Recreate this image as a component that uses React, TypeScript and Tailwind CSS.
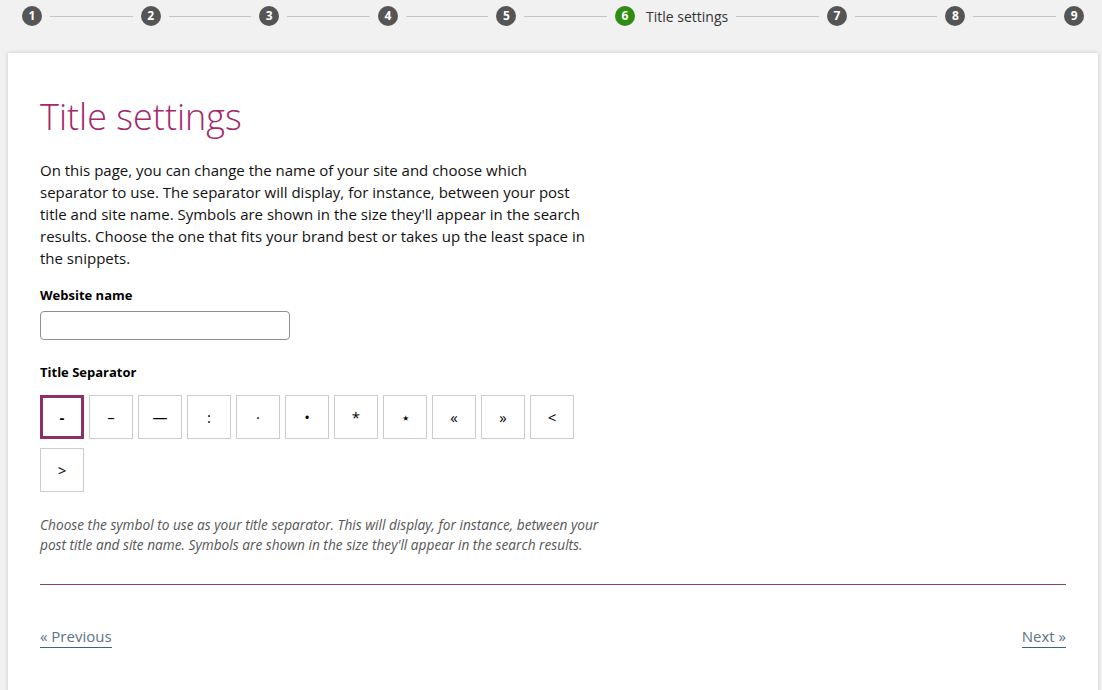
import React from 'react';

const steps = ['1', '2', '3', '4', '5', '6', '7', '8', '9'];
const separators = ['-', '–', '—', ':', '·', '•', '*', '⋆', '«', '»', '<', '>'];

const Stepper: React.FC = () => {
  return (
    <div className="flex items-center h-[32px] pl-[22px] pr-[18px]">
      {steps.map((s, i) => (
        <React.Fragment key={s}>
          <div className="flex items-center shrink-0">
            <span
              className={`w-[20px] h-[20px] rounded-full flex items-center justify-center text-[12px] font-bold text-white ${
                s === '6' ? 'bg-[#2f8d12]' : 'bg-[#555555]'
              }`}
            >
              {s}
            </span>
            {s === '6' && <span className="ml-[11px] text-[14px] text-[#333]">Title settings</span>}
          </div>
          {i < steps.length - 1 && <div className="flex-1 h-px bg-[#c4c4c4] mx-[8px]" />}
        </React.Fragment>
      ))}
    </div>
  );
};

export default function App() {
  return (
    <div
      className="h-[690px] bg-[#f1f1f1] text-[#1e1e1e] overflow-hidden"
      style={{ fontFamily: '"Open Sans", "Noto Sans", sans-serif' }}
    >
      <Stepper />
      <div className="mt-[21px] ml-[8px] w-[1090px] bg-white shadow-[0_0_4px_rgba(0,0,0,0.18)] px-[32px] pt-[42px] pb-[80px]">
        <h1 className="text-[36px] leading-[44px] font-light text-[#a4286a]">Title settings</h1>

        <p className="mt-[20px] text-[15px] leading-[22px] text-[#111]">
          On this page, you can change the name of your site and choose which
          <br />
          separator to use. The separator will display, for instance, between your post
          <br />
          title and site name. Symbols are shown in the size they'll appear in the search
          <br />
          results. Choose the one that fits your brand best or takes up the least space in
          <br />
          the snippets.
        </p>

        <label className="block mt-[16px] text-[13px] leading-[20px] font-bold text-black">Website name</label>
        <input
          type="text"
          className="block mt-[6px] w-[250px] h-[29px] border border-[#8c8f94] rounded-[4px] px-2 text-[14px]"
        />

        <div className="mt-[22px] text-[13px] leading-[20px] font-bold text-black">Title Separator</div>
        <div className="mt-[13px] flex flex-wrap w-[560px]">
          {separators.map((sym, i) => (
            <button
              key={i}
              className={`w-[44px] h-[44px] mr-[5px] mb-[9px] bg-white flex items-center justify-center text-[15px] text-black ${
                i === 0 ? 'border-[3px] border-[#8f2f68] font-bold' : 'border border-[#cccccc]'
              }`}
            >
              {sym}
            </button>
          ))}
        </div>

        <p className="mt-[14px] text-[13.7px] leading-[20px] italic text-[#555]">
          Choose the symbol to use as your title separator. This will display, for instance, between your
          <br />
          post title and site name. Symbols are shown in the size they'll appear in the search results.
        </p>

        <div className="mt-[29px] h-px bg-[#8f3f6e]" />

        <div className="mt-[40px] flex justify-between items-center">
          <a className="text-[15px] leading-[22px] text-[#5b7485] border-b border-[#3d6477]">« Previous</a>
          <a className="text-[15px] leading-[22px] text-[#5b7485] border-b border-[#3d6477]">Next »</a>
        </div>
      </div>
    </div>
  );
}
